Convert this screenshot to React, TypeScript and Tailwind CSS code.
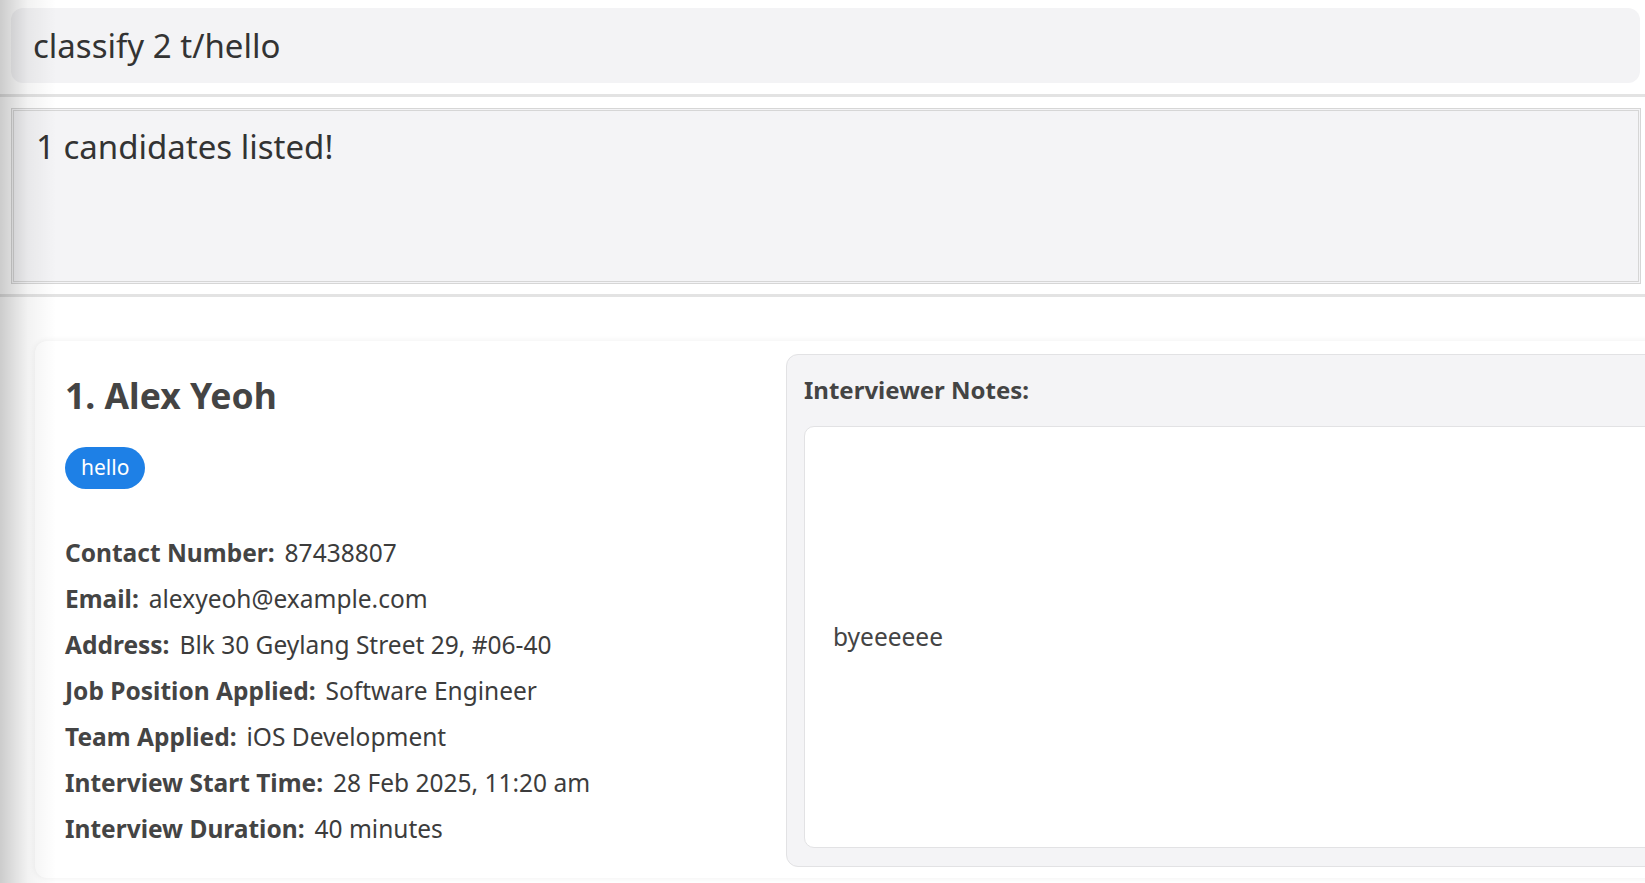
export default function App() {
  const rows = [
    ['Contact Number:', '87438807'],
    ['Email:', 'alexyeoh@example.com'],
    ['Address:', 'Blk 30 Geylang Street 29, #06-40'],
    ['Job Position Applied:', 'Software Engineer'],
    ['Team Applied:', 'iOS Development'],
    ['Interview Start Time:', '28 Feb 2025, 11:20 am'],
    ['Interview Duration:', '40 minutes'],
  ];

  return (
    <div className="relative w-full h-screen overflow-hidden bg-white font-['Noto_Sans',sans-serif] text-[#333]">
      {/* command box */}
      <div className="ml-[11px] mr-[5px] mt-[8px] h-[75px] rounded-[12px] bg-[#f3f3f5] flex items-center pl-[22px]">
        <span className="text-[33px] leading-[40px]">classify 2 t/hello</span>
      </div>

      <div className="mt-[11px] h-[3px] bg-[#e3e3e3]" />

      {/* result display */}
      <div className="ml-[11px] mr-[4px] mt-[11px] h-[176px] border-[3px] border-double border-[#d6d6d6] bg-[#f4f4f6] pl-[22px] pt-[16px]">
        <span className="text-[33px] leading-[40px]">1 candidates listed!</span>
      </div>

      <div className="mt-[10px] h-[3px] bg-[#e3e3e3]" />

      {/* candidate card */}
      <div className="ml-[35px] mt-[44px] w-[1700px] h-[537px] rounded-[12px] bg-white shadow-[0_0_6px_rgba(0,0,0,0.07)] flex">
        <div className="w-[751px] shrink-0 pl-[30px] pt-[32px] text-[#444]">
          <h1 className="text-[35.5px] leading-[44px] font-bold">1. Alex Yeoh</h1>
          <div className="mt-[30px] flex">
            <span className="h-[42px] px-[16px] rounded-full bg-[#1e80e6] text-white text-[21px] flex items-center">
              hello
            </span>
          </div>
          <div className="mt-[41px] flex flex-col">
            {rows.map(([label, value]) => (
              <div key={label} className="h-[46px] flex items-center gap-[10px] text-[24.5px]">
                <span className="font-bold">{label}</span>
                <span className="text-[#3c3c3c]">{value}</span>
              </div>
            ))}
          </div>
        </div>

        {/* notes panel */}
        <div className="mt-[13px] mb-[11px] w-[940px] shrink-0 rounded-[12px] border border-[#e2e2e4] bg-[#f4f4f6] pl-[17px] pt-[22px] pb-[18px] flex flex-col">
          <div className="text-[24px] leading-[26px] font-bold text-[#444]">Interviewer Notes:</div>
          <div className="mt-[23px] flex-1 rounded-[10px] border border-[#e2e2e4] bg-white flex items-center pl-[28px]">
            <span className="text-[24.5px] text-[#444]">byeeeeee</span>
          </div>
        </div>
      </div>

      {/* left edge shadow */}
      <div className="pointer-events-none absolute left-0 top-0 h-full w-[56px] bg-gradient-to-r from-black/20 via-black/5 to-transparent" />
    </div>
  );
}
